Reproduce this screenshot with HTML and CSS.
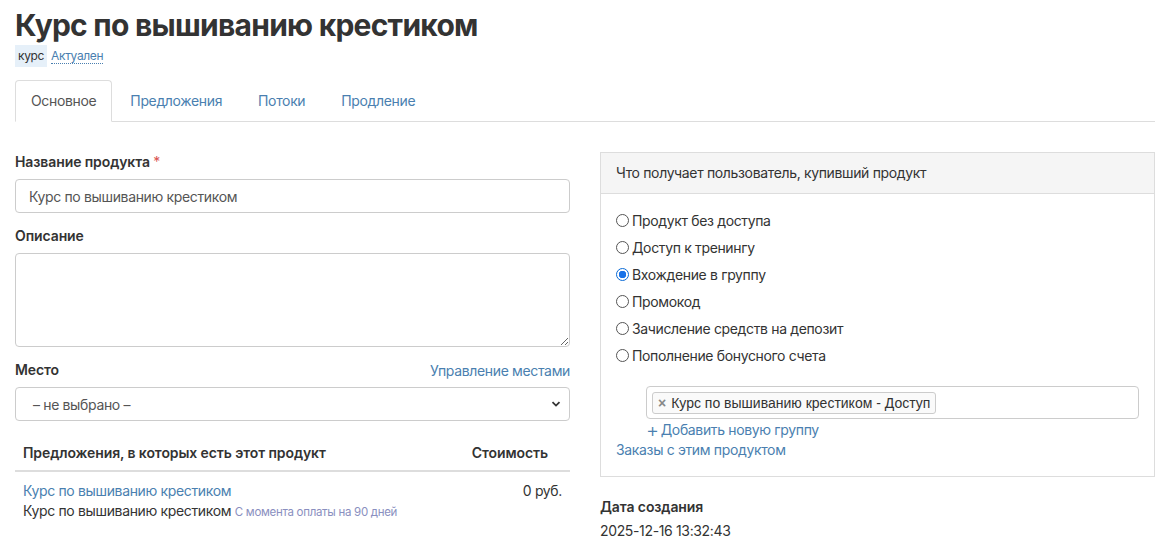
FILE: index.html
```html
<!DOCTYPE html>
<html lang="ru">
<head>
<meta charset="utf-8">
<link rel="stylesheet" href="styles.css">
</head>
<body>
<div class="page">
  <h1 class="title">Курс по вышиванию крестиком</h1>
  <div class="meta">
    <span class="badge">курс</span>
    <a class="status">Актуален</a>
  </div>
  <ul class="tabs">
    <li class="tab active">Основное</li>
    <li class="tab">Предложения</li>
    <li class="tab">Потоки</li>
    <li class="tab">Продление</li>
  </ul>
  <div class="columns">
    <div class="col-left">
      <div class="field">
        <label class="label">Название продукта <span class="req">*</span></label>
        <input class="input" type="text" value="Курс по вышиванию крестиком">
      </div>
      <div class="field">
        <label class="label">Описание</label>
        <textarea class="textarea"></textarea>
      </div>
      <div class="field">
        <div class="label-row">
          <label class="label">Место</label>
          <a class="link manage">Управление местами</a>
        </div>
        <div class="select">
          <span>– не выбрано –</span>
          <svg class="chev" width="10" height="8" viewBox="0 0 10 8"><path d="M1.5 2.2 L5 5.6 L8.5 2.2" fill="none" stroke="#333" stroke-width="1.8"/></svg>
        </div>
      </div>
      <div class="offers">
        <div class="offers-head">
          <span>Предложения, в которых есть этот продукт</span>
          <span>Стоимость</span>
        </div>
        <div class="offers-row">
          <div class="offer-info">
            <a class="link">Курс по вышиванию крестиком</a>
            <div class="offer-sub">Курс по вышиванию крестиком <span class="muted">С момента оплаты на 90 дней</span></div>
          </div>
          <div class="price">0 руб.</div>
        </div>
      </div>
    </div>
    <div class="col-right">
      <div class="panel">
        <div class="panel-head">Что получает пользователь, купивший продукт</div>
        <div class="panel-body">
          <label class="radio"><span class="rb"></span>Продукт без доступа</label>
          <label class="radio"><span class="rb"></span>Доступ к тренингу</label>
          <label class="radio"><span class="rb checked"></span>Вхождение в группу</label>
          <label class="radio"><span class="rb"></span>Промокод</label>
          <label class="radio"><span class="rb"></span>Зачисление средств на депозит</label>
          <label class="radio"><span class="rb"></span>Пополнение бонусного счета</label>
          <div class="groups">
            <div class="multi">
              <span class="chip"><span class="chip-x">×</span>Курс по вышиванию крестиком - Доступ</span>
            </div>
            <a class="link add"><span class="plus">+</span>Добавить новую группу</a>
          </div>
          <a class="link orders">Заказы с этим продуктом</a>
        </div>
      </div>
      <div class="created">
        <div class="label">Дата создания</div>
        <div class="date">2025-12-16 13:32:43</div>
      </div>
    </div>
  </div>
</div>
</body>
</html>
```

FILE: styles.css
```css
* { box-sizing: border-box; }
html, body { margin: 0; padding: 0; background: #fff; }
body {
  font-family: Inter, "Noto Sans", sans-serif;
  font-size: 14px;
  letter-spacing: -0.35px;
  color: #333;
}
.page { padding: 0 11px 0 15px; }
.title {
  margin: 0;
  padding-top: 6px;
  font-size: 30px;
  font-weight: 700;
  line-height: 38px;
  color: #333;
  letter-spacing: -0.75px;
}
.meta { display: flex; align-items: center; gap: 4px; height: 22px; margin-top: 1px; }
.badge {
  background: #e6f0f9;
  font-size: 12px;
  padding: 3px 3px;
  line-height: 16px;
  color: #333;
}
.status {
  font-size: 12px;
  color: #4a7fb0;
  border-bottom: 1px dotted #4a7fb0;
  line-height: 14px;
}
.tabs {
  list-style: none;
  margin: 13px 0 0;
  padding: 0;
  display: flex;
  border-bottom: 1px solid #ddd;
  height: 42px;
}
.tab {
  padding: 0 17px;
  line-height: 40px;
  color: #4a7fb0;
  font-size: 14px;
  border: 1px solid transparent;
  border-radius: 4px 4px 0 0;
  margin-bottom: -1px;
}
.tab.active {
  color: #555;
  border-color: #ddd;
  border-bottom-color: #fff;
  background: #fff;
  padding: 0 15px;
}
.columns { display: flex; gap: 30px; margin-top: 30px; }
.col-left { width: 555px; }
.col-right { flex: 1; }
.field { margin-bottom: 13px; }
.label { display: block; font-weight: 600; margin-bottom: 7px; line-height: 20px; letter-spacing: -0.1px; }
.req { color: #d9534f; font-weight: 400; }
.label-row { display: flex; justify-content: space-between; align-items: flex-start; }
.link { color: #4a7fb0; text-decoration: none; }
.manage { line-height: 20px; margin-top: 1px; }
.input {
  width: 100%;
  height: 34px;
  border: 1px solid #ccc;
  border-radius: 4px;
  padding: 6px 13px;
  font-family: inherit;
  font-size: 14px;
  letter-spacing: -0.35px;
  color: #555;
}
.textarea {
  display: block;
  width: 100%;
  height: 94px;
  border: 1px solid #ccc;
  border-radius: 4px;
  font-family: inherit;
  resize: vertical;
}
.select {
  height: 34px;
  border: 1px solid #ccc;
  border-radius: 4px;
  padding: 0 8px 0 17px;
  display: flex;
  align-items: center;
  justify-content: space-between;
  color: #555;
}
.offers { margin-top: 21px; }
.offers-head {
  display: flex;
  justify-content: space-between;
  font-weight: 600;
  letter-spacing: -0.1px;
  padding: 1px 22px 7px 8px;
  line-height: 20px;
  border-bottom: 2px solid #ddd;
}
.offers-row {
  display: flex;
  justify-content: space-between;
  padding: 9px 8px 0 8px;
}
.offer-info { line-height: 20px; }
.offer-sub { color: #333; }
.muted { color: #8a8fc0; font-size: 11.5px; letter-spacing: -0.3px; }
.price { line-height: 20px; }
.panel { border: 1px solid #ddd; }
.panel-head {
  background: #f5f5f5;
  border-bottom: 1px solid #ddd;
  padding: 0 15px;
  line-height: 40px;
  color: #333;
}
.panel-body { padding: 13px 15px 16px; }
.radio { display: flex; align-items: center; line-height: 27px; height: 27px; }
.rb {
  width: 13px; height: 13px;
  border: 1px solid #555;
  border-radius: 50%;
  margin-right: 3px;
  flex: none;
}
.rb.checked {
  border: 1px solid #0b6bd6;
  background: radial-gradient(circle, #1a73e8 0 3.5px, #fff 4px);
}
.groups { padding: 17px 0 0 30px; }
.multi {
  height: 33px;
  border: 1px solid #ccc;
  border-radius: 4px;
  padding: 5px;
  display: flex;
  align-items: flex-start;
}
.chip {
  font-family: "Liberation Sans", Arial, sans-serif;
  font-size: 14px;
  letter-spacing: 0;
  background: #fafafa;
  border: 1px solid #ccc;
  border-radius: 3px;
  padding: 0 5px;
  line-height: 20px;
  color: #333;
}
.chip-x { color: #888; font-weight: 700; margin-right: 5px; }
.add { display: flex; align-items: center; margin-top: 1px; line-height: 20px; height: 20px; }
.plus { font-size: 20px; font-weight: 300; margin-right: 2px; line-height: 20px; }
.orders { display: block; line-height: 20px; }
.created { margin-top: 20px; }
.created .label { margin-bottom: 4px; }
.date { line-height: 20px; margin-top: 3px; }
```
